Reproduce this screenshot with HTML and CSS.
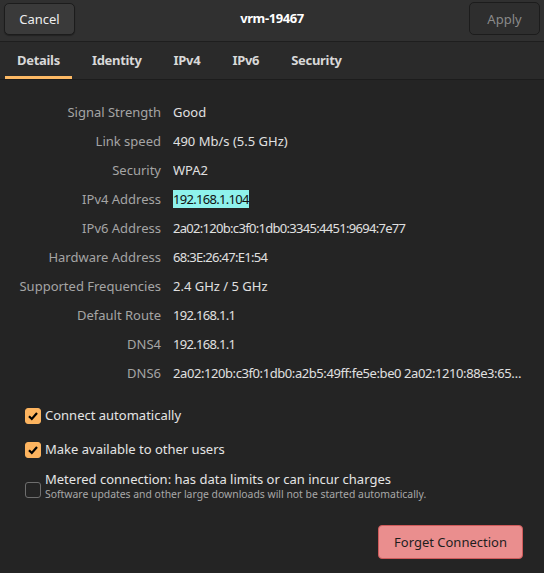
FILE: index.html
```html
<!DOCTYPE html>
<html>
<head>
<meta charset="utf-8">
<link rel="stylesheet" href="styles.css">
</head>
<body>
<div class="window">
  <header class="headerbar">
    <button class="btn">Cancel</button>
    <div class="title">vrm-19467</div>
    <button class="btn btn-disabled">Apply</button>
  </header>
  <nav class="tabs">
    <div class="tab active">Details</div>
    <div class="tab">Identity</div>
    <div class="tab">IPv4</div>
    <div class="tab">IPv6</div>
    <div class="tab">Security</div>
  </nav>
  <main class="content">
    <div class="grid">
      <div class="label">Signal Strength</div><div class="value">Good</div>
      <div class="label">Link speed</div><div class="value">490 Mb/s (5.5 GHz)</div>
      <div class="label">Security</div><div class="value">WPA2</div>
      <div class="label">IPv4 Address</div><div class="value num"><span class="sel">192.168.1.104</span></div>
      <div class="label">IPv6 Address</div><div class="value num">2a02:120b:c3f0:1db0:3345:4451:9694:7e77</div>
      <div class="label">Hardware Address</div><div class="value num">68:3E:26:47:E1:54</div>
      <div class="label">Supported Frequencies</div><div class="value">2.4 GHz / 5 GHz</div>
      <div class="label">Default Route</div><div class="value num">192.168.1.1</div>
      <div class="label">DNS4</div><div class="value num">192.168.1.1</div>
      <div class="label">DNS6</div><div class="value num2">2a02:120b:c3f0:1db0:a2b5:49ff:fe5e:be0 2a02:1210:88e3:65…</div>
    </div>
    <div class="checks">
      <label class="check">
        <span class="box on"><svg width="12" height="12" viewBox="0 0 12 12"><path d="M2 6.2 L4.8 9 L10 3" fill="none" stroke="#000" stroke-width="2.2"/></svg></span>
        <span class="ctext">Connect automatically</span>
      </label>
      <label class="check">
        <span class="box on"><svg width="12" height="12" viewBox="0 0 12 12"><path d="M2 6.2 L4.8 9 L10 3" fill="none" stroke="#000" stroke-width="2.2"/></svg></span>
        <span class="ctext">Make available to other users</span>
      </label>
      <label class="check metered">
        <span class="box"></span>
        <span class="ctext">
          <span class="mtitle">Metered connection: has data limits or can incur charges</span>
          <span class="sub">Software updates and other large downloads will not be started automatically.</span>
        </span>
      </label>
    </div>
    <div class="actions">
      <button class="forget">Forget Connection</button>
    </div>
  </main>
</div>
</body>
</html>
```
FILE: styles.css
```css
* { box-sizing: border-box; }
html, body { margin: 0; padding: 0; }
body {
  width: 544px; height: 573px;
  background: #242424;
  font-family: "Noto Sans", "Open Sans", sans-serif;
  color: #e8e8e8;
  overflow: hidden;
}
.window { display: flex; flex-direction: column; height: 573px; }
.headerbar {
  height: 42px;
  background: #303030;
  border-bottom: 1px solid #1e1e1e;
  display: flex; align-items: flex-start; justify-content: space-between;
  padding: 3px 4px 0 4px;
}
.btn {
  width: 71px; height: 32px;
  background: #3a3a3a;
  border: 1px solid #1c1c1c;
  border-radius: 5px;
  color: #eeeeee;
  font-family: inherit; font-size: 13px;
  box-shadow: 0 1px 1px rgba(0,0,0,0.3);
}
.btn-disabled { background: #2e2e2e; color: #8a8a8a; box-shadow: none; margin-top: -1px; height: 33px; }
.title { font-weight: bold; font-size: 13px; letter-spacing: -0.4px; color: #ffffff; line-height: 30px; }
.tabs {
  height: 38px;
  background: #2a2a2a;
  border-bottom: 1px solid #1c1c1c;
  display: flex; padding-left: 5px;
}
.tab {
  padding: 0 12px; font-size: 13px; font-weight: bold; color: #d8d8d8;
  display: flex; align-items: center; margin-right: 8px;
  border-bottom: 3px solid transparent;
  padding-top: 2px;
  letter-spacing: -0.3px;
}
.tab.active { border-bottom-color: #fdb964; }
.content { flex: 1; display: flex; flex-direction: column; padding-top: 18px; }
.grid {
  display: grid;
  grid-template-columns: 161px 1fr;
  column-gap: 12px;
  row-gap: 0;
  font-size: 13px;
}
.label, .value { height: 29px; line-height: 29px; }
.label { text-align: right; color: #a5a5a5; }
.value { color: #e0e0e0; white-space: nowrap; overflow: hidden; }
.num { letter-spacing: -0.7px; }
.num2 { letter-spacing: -0.42px; }
.sel { background: #8ef2ec; color: #111; }
.checks { padding-left: 25px; margin-top: 19px; display: flex; flex-direction: column; gap: 17px; }
.check { display: flex; align-items: center; gap: 4px; font-size: 13px; color: #e4e4e4; }
.box {
  width: 16px; height: 16px; border-radius: 3px;
  border: 1px solid #6e6e6e;
  display: flex; align-items: center; justify-content: center;
  flex: none;
}
.box.on { background: #fdb45f; border-color: #fdb45f; }
.metered { margin-top: -5px; }
.metered .box { margin-top: 12px; align-self: flex-start; }
.ctext { display: flex; flex-direction: column; line-height: 17px; }
.mtitle { line-height: 18px; }
.sub { font-size: 10.4px; color: #a8a8a8; line-height: 12px; }
.actions { display: flex; justify-content: flex-end; padding: 25px 21px 0 0; }
.forget {
  width: 145px; height: 34px;
  background: #ea8e8e; border: 1px solid #cf5b5b; border-radius: 4px;
  color: #1e1e1e; font-family: inherit; font-size: 13px;
}
```
